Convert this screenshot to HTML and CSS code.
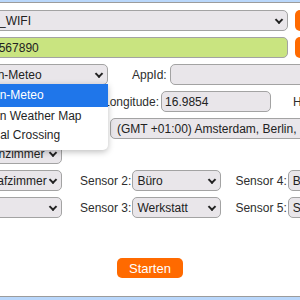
FILE: index.html
```html
<!DOCTYPE html>
<html lang="de">
<head>
<meta charset="UTF-8">
<meta name="viewport" content="width=device-width, initial-scale=1.0">
<title>Wetterstation Setup</title>
<link rel="stylesheet" href="styles.css">
</head>
<body>
  <div class="page">
    <div class="row">
      <span class="sel wide"><select id="ssid" class="ssid"><option>MEIN_WIFI</option></select></span>
      <button class="side">Scan</button>
    </div>
    <div class="row">
      <input type="text" class="field wide ok" id="pass" value="1234567890">
      <button class="side">Zeigen</button>
    </div>
    <div class="row">
      <span class="sel provider"><select id="provider"><option>Open-Meteo</option></select></span>
      <label class="lbl appid" for="appid">AppId:</label>
      <input type="text" class="field appkey" id="appid">
      <ul class="dropdown">
        <li class="active">Open-Meteo</li>
        <li>Open Weather Map</li>
        <li>Visual Crossing</li>
      </ul>
    </div>
    <div class="row">
      <input type="text" class="field coord" id="lat" value="48.2082">
      <label class="lbl lon" for="lon">Longitude:</label>
      <input type="text" class="field coord" id="lon" value="16.9854">
      <label class="lbl alt" for="alt">Höhe:</label>
    </div>
    <div class="row tz-row">
      <label class="lbl tz-lbl" for="tz">Zeitzone:</label>
      <span class="sel tz"><select id="tz"><option>(GMT +01:00) Amsterdam, Berlin, Bern, Rom, Stockholm, Wien</option></select></span>
    </div>
    <div class="row">
      <span class="sel room"><select><option>Wohnzimmer</option></select></span>
    </div>
    <div class="row">
      <span class="sel room"><select><option>Schlafzimmer</option></select></span>
      <label class="lbl sensor first">Sensor 2:</label>
      <span class="sel room2"><select><option>Büro</option></select></span>
      <label class="lbl sensor">Sensor 4:</label>
      <span class="sel room2"><select><option>Bad</option></select></span>
    </div>
    <div class="row">
      <span class="sel room"><select><option></option></select></span>
      <label class="lbl sensor first">Sensor 3:</label>
      <span class="sel room2"><select><option>Werkstatt</option></select></span>
      <label class="lbl sensor">Sensor 5:</label>
      <span class="sel room2"><select><option>Studio</option></select></span>
    </div>
    <div class="actions">
      <button class="start">Starten</button>
    </div>
  </div>
</body>
</html>
```

FILE: styles.css
```css
body {
  margin: 0;
  background: #b9d7fb;
  font-family: "Liberation Sans", Arial, sans-serif;
  font-size: 12px;
  color: #2a2a2a;
  overflow: hidden;
}

.page {
  margin: 2px -200px 0 -33px;
  height: 286px;
  padding-top: 7px;
  background: #fff;
  border: 1px solid #9c9c9c;
}

.row {
  position: relative;
  display: flex;
  align-items: center;
  height: 21px;
  margin-bottom: 6px;
}

.tz-row {
  margin-bottom: 4px;
}

.sel {
  position: relative;
  display: block;
  height: 21px;
}

.sel::after {
  content: "";
  position: absolute;
  right: 6px;
  top: 50%;
  width: 4px;
  height: 4px;
  border-right: 2px solid #222;
  border-bottom: 2px solid #222;
  transform: translateY(-70%) rotate(45deg);
  pointer-events: none;
}

select,
.field {
  box-sizing: border-box;
  height: 21px;
  width: 100%;
  margin: 0;
  padding: 0 10px 0 4px;
  font: inherit;
  color: #222;
  background: #e9e6ea;
  border: 1px solid #a3a3a3;
  border-radius: 5px;
  -webkit-appearance: none;
  appearance: none;
  white-space: nowrap;
  overflow: hidden;
}

.field {
  padding: 0 4px 0 3px;
}

.ssid {
  padding-left: 0;
}

.wide {
  width: 320px;
}

.ok {
  background: #c9e480;
}

.side {
  width: 90px;
  height: 21px;
  margin-left: 7px;
  border: none;
  border-radius: 5px;
  background: #ff6a00;
  color: #fff;
  font: inherit;
}

.provider {
  width: 140px;
}

.provider select {
  padding-left: 6px;
}

.lbl {
  white-space: nowrap;
  color: #2e2e2e;
}

.appid {
  margin-left: 24px;
  margin-right: 3px;
}

.appkey {
  width: 220px;
}

.coord {
  width: 110px;
}

.lon {
  margin-left: 25px;
  margin-right: 2px;
}

.alt {
  margin-left: 22px;
}

.tz-lbl {
  width: 142px;
}

.tz {
  width: 330px;
}

.tz select {
  padding-left: 6px;
  padding-right: 0;
}

.room {
  width: 94px;
}

.room select {
  padding: 0 2px 0 5px;
}

.room2 {
  width: 89px;
}

.sensor {
  margin-left: 14px;
  margin-right: 1px;
}

.sensor.first {
  margin-left: 18px;
}

.dropdown {
  position: absolute;
  left: -4px;
  top: 20px;
  z-index: 2;
  width: 144px;
  margin: 0;
  padding: 0 0 5px;
  list-style: none;
  background: #fff;
  border-radius: 0 0 5px 5px;
  box-shadow: 0 2px 6px rgba(0, 0, 0, 0.25);
}

.dropdown li {
  height: 19px;
  line-height: 19px;
  padding-left: 13px;
  font-size: 12px;
  color: #1f1f1f;
}

.dropdown li.active {
  height: 23px;
  line-height: 23px;
  background: #1f76ea;
  color: #fff;
}

.actions {
  display: flex;
  justify-content: center;
  margin-top: 40px;
  padding-left: 33px;
  margin-right: 200px;
}

.start {
  width: 66px;
  height: 20px;
  border: none;
  border-radius: 5px;
  background: #ff6a00;
  color: #fff;
  font: inherit;
  font-size: 13px;
}
```
